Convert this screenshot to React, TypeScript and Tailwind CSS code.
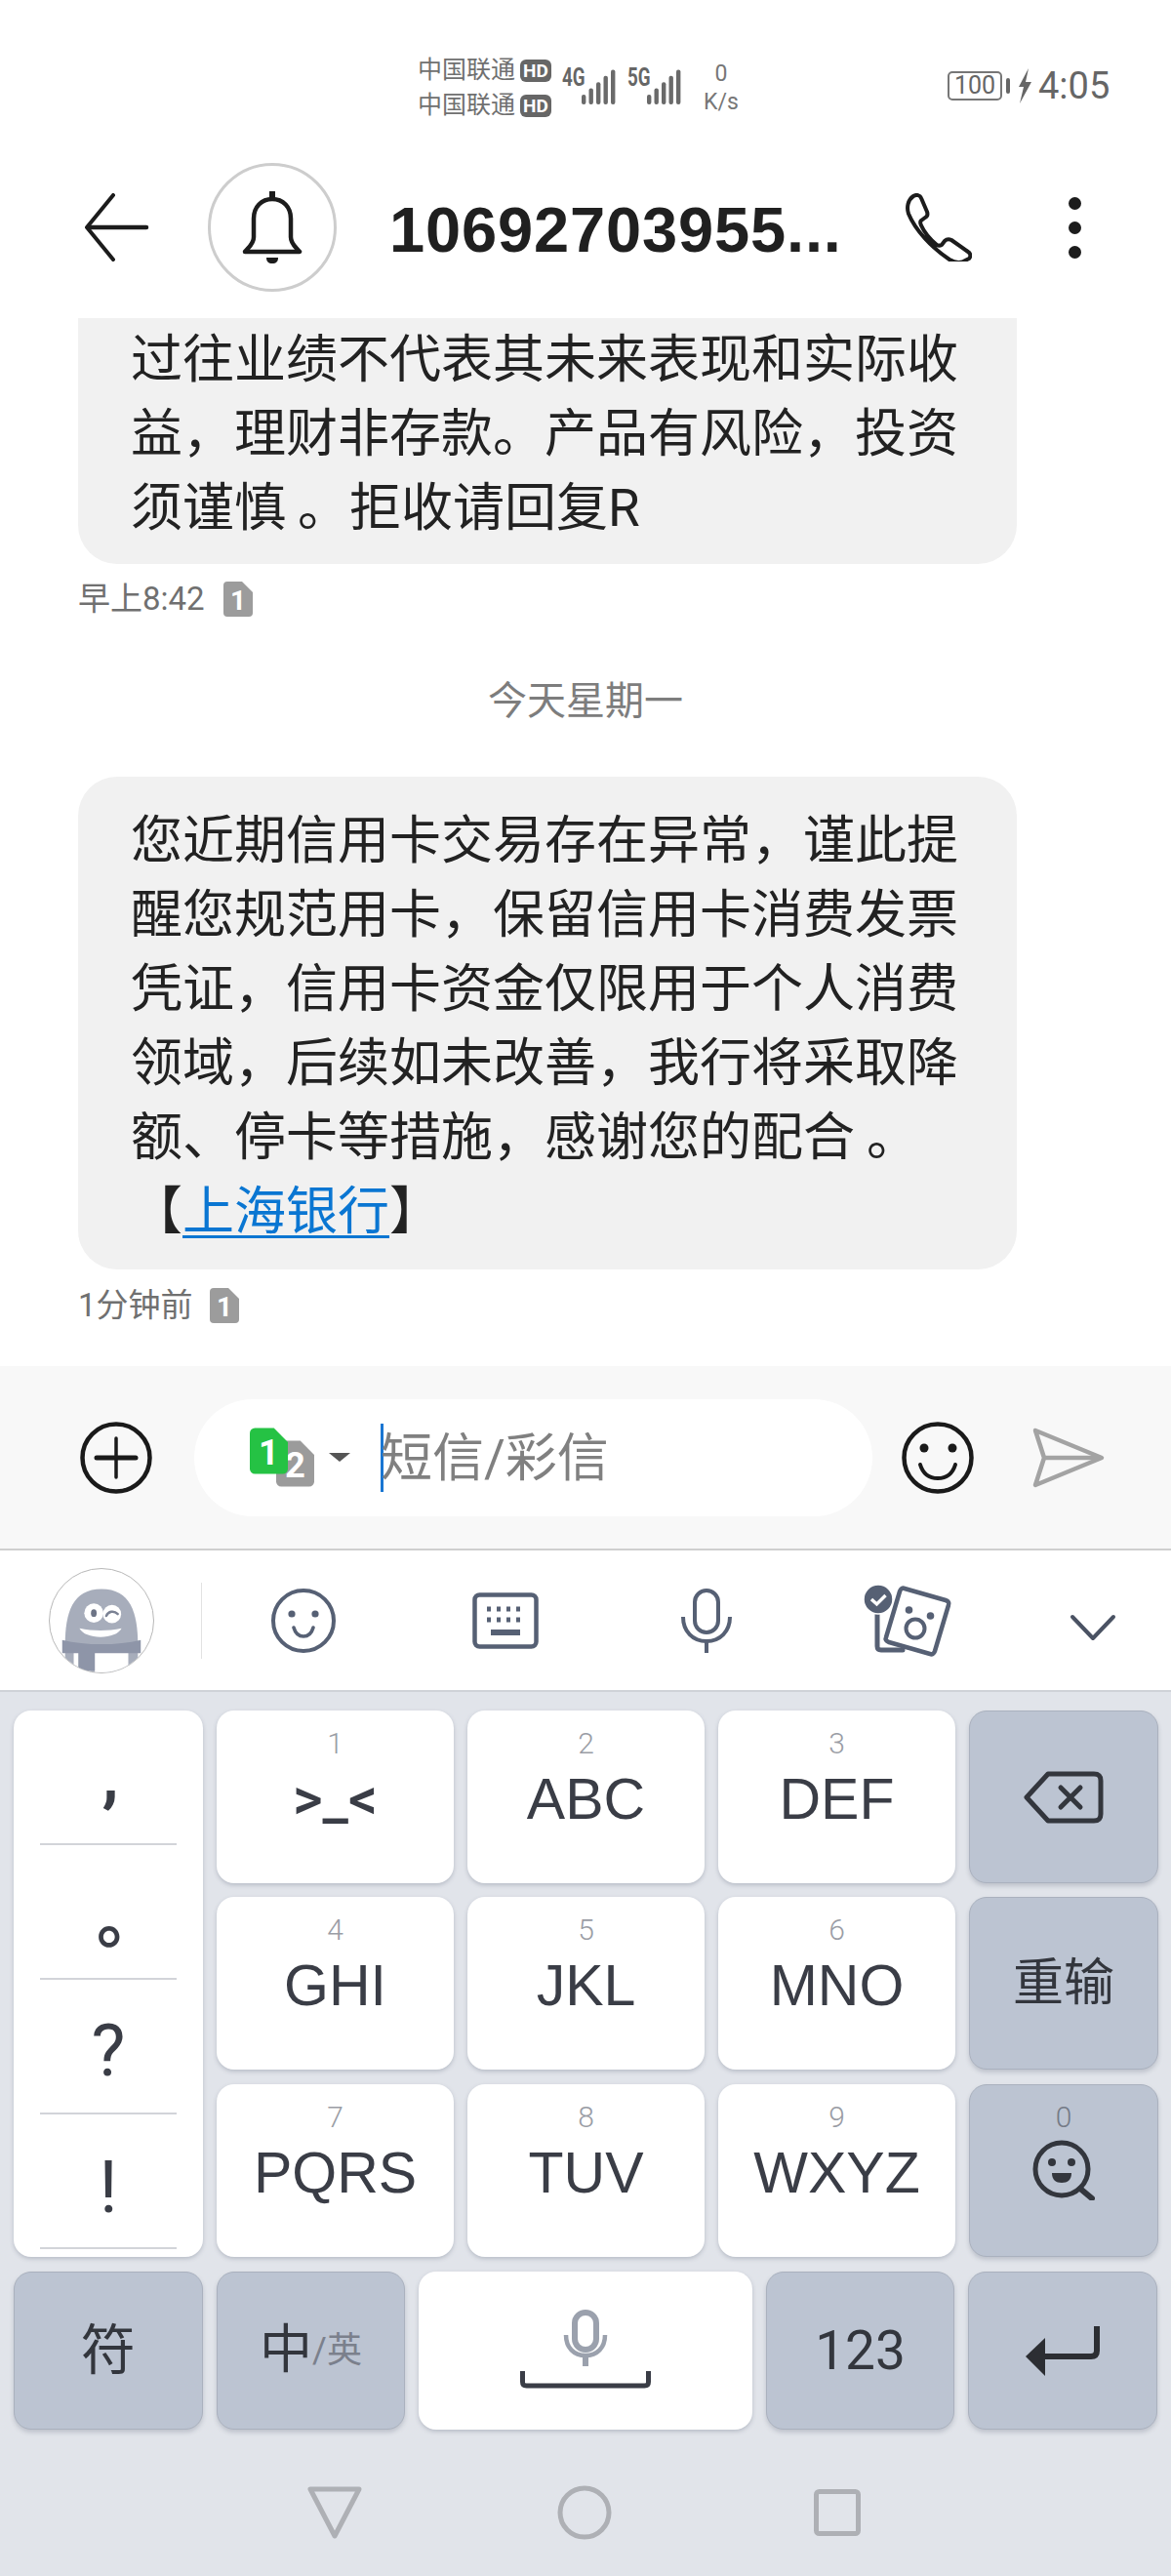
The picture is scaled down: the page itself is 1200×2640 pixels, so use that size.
import React from "react";

const cjk = "font-['Roboto','Noto_Sans_CJK_SC',sans-serif]";
const arial = "font-['Liberation_Sans','Noto_Sans_CJK_SC',sans-serif]";

function Sim({ n, color, className }: { n: string; color: string; className?: string }) {
  return (
    <svg viewBox="0 0 30 36" className={className}>
      <path d="M4 0H19L30 11V32a4 4 0 0 1-4 4H4a4 4 0 0 1-4-4V4a4 4 0 0 1 4-4Z" fill={color} />
      <text x="15" y="29" textAnchor="middle" fontSize="28" fontWeight="700" fill="#fff" fontFamily="Roboto, sans-serif">{n}</text>
    </svg>
  );
}

function Bars({ w }: { w: number }) {
  return (
    <svg width={w} height="36" viewBox="0 0 35 36">
      {[0, 7.5, 15, 22.5, 30].map((x, i) => (
        <rect key={x} x={x} y={26 - i * 6.4} width="4.4" height={10 + i * 6.4} rx="2" fill="#6a6a6a" />
      ))}
    </svg>
  );
}

function StatusBar() {
  return (
    <div className="h-[150px] shrink-0 flex items-start pt-[54px] pl-[428px] text-[#707070]">
      <div className="flex flex-col w-[139px]">
        {[0, 1].map((i) => (
          <div key={i} className="flex items-center h-[36px]">
            <span className="text-[25px] leading-[36px] w-[105px] whitespace-nowrap">中国联通</span>
            <span className="w-[32px] h-[23px] rounded-[6px] bg-[#666] text-white text-[19px] leading-[23px] font-bold text-center">HD</span>
          </div>
        ))}
      </div>
      <div className="ml-[9px] relative w-[55px] h-[60px]">
        <span className="absolute left-0 top-[12px] text-[25px] leading-[28px] font-bold text-[#666] scale-x-75 origin-left">4G</span>
        <div className="absolute left-[20px] top-[17px]"><Bars w={35} /></div>
      </div>
      <div className="ml-[12px] relative w-[55px] h-[60px]">
        <span className="absolute left-0 top-[12px] text-[25px] leading-[28px] font-bold text-[#666] scale-x-75 origin-left">5G</span>
        <div className="absolute left-[20px] top-[17px]"><Bars w={35} /></div>
      </div>
      <div className="ml-[21px] w-[40px] flex flex-col items-center text-[23px] leading-[29px] text-[#777] pt-[7px]">
        <span>0</span>
        <span>K/s</span>
      </div>
      <div className="ml-[212px] mt-[19px] flex items-center h-[30px]">
        <span className="w-[56px] h-[30px] border-2 border-[#777] rounded-[5px] text-[25px] leading-[26px] text-center text-[#666]">100</span>
        <span className="ml-[4px] w-[4px] h-[16px] bg-[#666] rounded-sm" />
        <svg width="18" height="36" viewBox="0 0 18 36" className="ml-[6px]">
          <path d="M13 0 3 19h5L4 36 16 14h-6l3-14Z" fill="#666" />
        </svg>
        <span className="ml-[5px] text-[38px] leading-[44px] text-[#666]">4:05</span>
      </div>
    </div>
  );
}

function Header() {
  return (
    <div className="h-[176px] shrink-0 pb-[10px] flex items-center">
      <svg width="68" height="70" viewBox="0 0 68 70" className="ml-[86px] shrink-0" fill="none" stroke="#1c1c1c" strokeLinecap="round">
        <path d="M30 2 3 35l27 33" strokeWidth="4" strokeLinejoin="round" />
        <path d="M4 35h60" strokeWidth="4.5" />
      </svg>
      <div className="ml-[59px] w-[132px] h-[132px] shrink-0 rounded-full border-[3px] border-[#cdcdcd] flex items-center justify-center">
        <svg width="64" height="74" viewBox="0 0 64 74" fill="none" stroke="#1c1c1c" strokeWidth="4.5">
          <path d="M32 1v6" strokeWidth="6" strokeLinecap="round" />
          <path d="M13 28C13 16 21 8 32 8s19 8 19 20v19c0 7 5 10 9 15H4c4-5 9-8 9-15Z" strokeLinejoin="round" />
          <path d="M26 68h12c0 4-2 6-6 6s-6-2-6-6Z" fill="#1c1c1c" stroke="none" />
        </svg>
      </div>
      <span className={`ml-[54px] mt-[6px] w-[496px] text-[65px] leading-[72px] font-bold text-[#202020] tracking-[0.85px] whitespace-nowrap ${arial}`}>10692703955...</span>
      <svg width="68" height="70" viewBox="0 0 68 70" className="ml-[33px] shrink-0" fill="none" stroke="#1c1c1c" strokeWidth="4" strokeLinejoin="round">
        <path d="M8 3c3-2 7-1 8 2l6 14c1 3 0 5-2 6l-4 3c-1 1-1 3 0 5 4 9 9 14 16 20 2 1 3 1 5 0l3-4c2-2 5-2 7-1l17 12c3 2 3 5 1 7l-6 3c-5 2-9 1-14-2C27 56 10 38 3 21 1 15 2 7 8 3Z" />
      </svg>
      <div className="ml-[99px] flex flex-col gap-[12px] shrink-0">
        <span className="w-[13px] h-[13px] rounded-full bg-[#1c1c1c]" />
        <span className="w-[13px] h-[13px] rounded-full bg-[#1c1c1c]" />
        <span className="w-[13px] h-[13px] rounded-full bg-[#1c1c1c]" />
      </div>
    </div>
  );
}

function Bubble({ lines, className }: { lines: React.ReactNode[]; className: string }) {
  return (
    <div className={`ml-[80px] w-[962px] bg-[#f1f1f1] pl-[54px] text-[53px] leading-[76px] text-[#222] ${className}`}>
      {lines.map((l, i) => (
        <div key={i} className="whitespace-nowrap">{l}</div>
      ))}
    </div>
  );
}

function Stamp({ t, w }: { t: string; w: number }) {
  return (
    <div className="ml-[80px] h-[40px] flex items-center text-[33px] text-[#707070]">
      <span className="whitespace-nowrap" style={{ width: w }}>{t}</span>
      <Sim n="1" color="#9c9c9c" className="w-[30px] h-[36px]" />
    </div>
  );
}

function Messages() {
  return (
    <div className="h-[1074px] shrink-0">
      <Bubble
        className="rounded-b-[40px] pt-[5px] pb-[19px]"
        lines={["过往业绩不代表其未来表现和实际收", "益，理财非存款。产品有风险，投资", <span>须谨慎<span className="ml-[12px]">。</span>拒收请回复R</span>]}
      />
      <div className="mt-[16px]"><Stamp t="早上8:42" w={149} /></div>
      <div className="mt-[55px] h-[60px] leading-[60px] text-center text-[40px] text-[#7d7d7d]">今天星期一</div>
      <Bubble
        className="mt-[47px] rounded-[40px] pt-[28px] pb-[21px]"
        lines={[
          "您近期信用卡交易存在异常，谨此提",
          "醒您规范用卡，保留信用卡消费发票",
          "凭证，信用卡资金仅限用于个人消费",
          "领域，后续如未改善，我行将采取降",
          <span>额、停卡等措施，感谢您的配合<span className="ml-[12px]">。</span></span>,
          <span>【<span className="text-[#0a76d2] underline underline-offset-[6px] decoration-[3px]">上海银行</span>】</span>,
        ]}
      />
      <div className="mt-[17px]"><Stamp t="1分钟前" w={135} /></div>
    </div>
  );
}

function InputBar() {
  return (
    <div className="h-[189px] shrink-0 bg-[#f8f8f8] border-b-2 border-[#cfcfcf] flex items-center">
      <svg width="74" height="74" viewBox="0 0 74 74" className="ml-[82px] shrink-0" fill="none" stroke="#1a1a1a">
        <circle cx="37" cy="37" r="34.5" strokeWidth="4.5" />
        <path d="M37 17v40" strokeWidth="3.5" strokeLinecap="round" />
        <path d="M17 37h40" strokeWidth="5" strokeLinecap="round" />
      </svg>
      <div className="ml-[43px] w-[695px] h-[120px] rounded-[60px] bg-white flex items-center shrink-0">
        <div className="relative ml-[57px] w-[66px] h-[62px] shrink-0">
          <Sim n="2" color="#9b9b9b" className="absolute left-[27px] top-[13px] w-[39px] h-[48px]" />
          <Sim n="1" color="#25c244" className="absolute left-0 top-0 w-[39px] h-[48px]" />
        </div>
        <svg width="22" height="9" viewBox="0 0 22 9" className="ml-[15px] shrink-0"><path d="M0 0h22L11 9Z" fill="#555" /></svg>
        <span className="ml-[31px] w-[3px] h-[70px] bg-[#1976d2] shrink-0" />
        <span className="text-[53px] leading-[64px] text-[#808080] whitespace-nowrap -ml-[3px] mt-[3px]">短信/彩信</span>
      </div>
      <svg width="74" height="74" viewBox="0 0 74 74" className="ml-[30px] shrink-0" fill="none" stroke="#1a1a1a" strokeWidth="4.5">
        <circle cx="37" cy="37" r="34.5" />
        <circle cx="23" cy="27" r="4.5" fill="#1a1a1a" stroke="none" />
        <circle cx="52" cy="27" r="4.5" fill="#1a1a1a" stroke="none" />
        <path d="M19 44c3 10 10 14 18 14s15-4 18-14" strokeWidth="4" strokeLinecap="round" />
      </svg>
      <svg width="74" height="62" viewBox="0 0 74 62" className="ml-[60px] shrink-0" fill="none" stroke="#a3a3a3" strokeWidth="4.5" strokeLinejoin="round">
        <path d="M3 3 71 31 3 59l9-28Z" />
        <path d="M12 31h58" />
      </svg>
    </div>
  );
}

const ic = "#566074";

function Toolbar() {
  return (
    <div className="h-[145px] shrink-0 bg-white border-b-2 border-[#cfd2d8] flex items-center">
      <div className="ml-[50px] w-[108px] h-[108px] rounded-full border border-[#b8b8b8] overflow-hidden shrink-0 bg-white">
        <svg viewBox="0 0 108 108" className="w-full h-full">
          <path d="M16 80C16 45 24 21 54 21s38 24 38 59v28H16Z" fill="#a7adbb" />
          <path d="M47 87h35v21H47Z" fill="#fff" />
          <path d="M25 87h5v21h-5Z" fill="#fff" />
          <circle cx="46" cy="46" r="10" fill="#fff" />
          <ellipse cx="46" cy="46" rx="3" ry="4" fill="#6d7486" />
          <circle cx="65" cy="47" r="9.5" fill="#fff" />
          <path d="M59 49c2-5 8-6 12-2" stroke="#7b8294" strokeWidth="2.5" fill="none" strokeLinecap="round" />
          <path d="M31 62c14 3 30 3 44 0-3 6-12 9-22 9s-19-3-22-9Z" fill="#fff" />
          <path d="M13 74c25 6 57 6 82 0v14H13Z" fill="#8e95a8" />
          <path d="M30 87h17v19H30Z" fill="#8e95a8" />
        </svg>
      </div>
      <span className="ml-[48px] w-px h-[78px] bg-[#e2e2e2] shrink-0" />
      <svg width="68" height="68" viewBox="0 0 68 68" className="ml-[70px] shrink-0" fill="none" stroke={ic} strokeWidth="4">
        <circle cx="34" cy="34" r="31" />
        <circle cx="22" cy="27" r="3.6" fill={ic} stroke="none" />
        <circle cx="46" cy="27" r="3.6" fill={ic} stroke="none" />
        <path d="M24 41c2 7 6 9 10 9s8-2 10-9" strokeWidth="3.6" strokeLinecap="round" />
      </svg>
      <svg width="68" height="58" viewBox="0 0 68 58" className="ml-[139px] shrink-0" fill="none">
        <rect x="2.5" y="2.5" width="63" height="53" rx="5" stroke={ic} strokeWidth="4.5" />
        <path d="M15 17h4m6 0h4m6 0h4m6 0h4M15 28h4m6 0h4m6 0h4m6 0h4" stroke={ic} strokeWidth="5" />
        <rect x="19" y="38" width="30" height="6" fill={ic} />
      </svg>
      <svg width="52" height="66" viewBox="0 0 52 66" className="ml-[146px] shrink-0" fill="none" stroke={ic} strokeWidth="4">
        <rect x="14" y="2" width="24" height="43" rx="12" />
        <path d="M2 29c0 15 10 25 24 25s24-10 24-25" />
        <path d="M26 54v12" />
      </svg>
      <svg width="120" height="100" viewBox="0 0 120 100" className="ml-[122px] shrink-0" fill="none">
        <path d="M27 36v40c0 3 1 4 4 4h22" stroke={ic} strokeWidth="5" strokeLinecap="round" />
        <path d="M55 17 97 29c3 1 4 3 3 5L86 81c-1 3-3 4-5 3L39 72c-3-1-4-3-3-5L50 20c1-3 3-4 5-3Z" fill="#fff" stroke={ic} strokeWidth="4.5" strokeLinejoin="round" />
        <circle cx="66" cy="58" r="9.5" stroke={ic} strokeWidth="4" />
        <circle cx="59.5" cy="39" r="3.8" fill={ic} />
        <circle cx="81.5" cy="45" r="3.8" fill={ic} />
        <circle cx="28" cy="28" r="15" fill={ic} stroke="#fff" strokeWidth="1.5" />
        <path d="M21 28l5.5 5 9-9" stroke="#fff" strokeWidth="3.4" />
      </svg>
      <svg width="48" height="28" viewBox="0 0 48 28" className="ml-[104px] mt-[14px] shrink-0" fill="none" stroke="#4a5263" strokeWidth="4" strokeLinecap="round" strokeLinejoin="round">
        <path d="M3 3 24 25 45 3" />
      </svg>
    </div>
  );
}

const white = "bg-white shadow-[0_2px_4px_rgba(90,100,120,0.3)]";
const gray = "bg-[#bcc4d2] border border-[#aab1be] shadow-[0_3px_4px_rgba(90,100,120,0.25)]";

function Key({ n, t, face = `text-[59px] ${arial}` }: { n: string; t: string; face?: string }) {
  return (
    <div className={`${white} rounded-[18px] h-[177px] relative flex items-center justify-center text-[#3a3d46]`}>
      <span className={`absolute top-[16px] inset-x-0 text-center text-[30px] leading-[36px] text-[#9a9da5] font-light ${cjk}`}>{n}</span>
      <span className={`${face} leading-[70px] mt-[5px] whitespace-nowrap`}>{t}</span>
    </div>
  );
}

function Keyboard() {
  return (
    <div className="flex-1 bg-[#e1e4ea] px-[14px] pt-[19px]">
      <div className="grid grid-cols-[194px_243px_243px_243px_194px] gap-x-[14px] gap-y-[14px]">
        <div className={`${white} row-span-3 rounded-[18px] overflow-hidden flex flex-col items-center text-[#3a3d46] h-[560px]`}>
          {[
            [",", "pb-[25px] pl-[4px] font-bold text-[70px]"],
            ["。", "pb-[14px] pl-[42px] text-[66px] font-bold"],
            ["?", "pb-[18px] text-[74px]"],
            ["!", "pb-[16px] text-[74px]"],
          ].map(([c, k]) => (
            <div key={c} className="w-[140px] h-[138px] shrink-0 border-b-2 border-[#d2d4d9] flex items-end justify-center">
              <span className={`${k} leading-[90px]`}>{c}</span>
            </div>
          ))}
        </div>
        <Key n="1" t=">_<" face="text-[59px] font-medium" />
        <Key n="2" t="ABC" />
        <Key n="3" t="DEF" />
        <div className={`${gray} rounded-[18px] h-[177px] flex items-center justify-center`}>
          <svg width="82" height="54" viewBox="0 0 82 54" fill="none" stroke="#33363d" strokeWidth="5" strokeLinejoin="round" strokeLinecap="round">
            <path d="M25 3h47c5 0 7 2 7 7v34c0 5-2 7-7 7H25L3 27Z" />
            <path d="M38 17l20 20M58 17 38 37" />
          </svg>
        </div>
        <Key n="4" t="GHI" />
        <Key n="5" t="JKL" />
        <Key n="6" t="MNO" />
        <div className={`${gray} rounded-[18px] h-[177px] flex items-center justify-center text-[52px] text-[#33363d]`}>重输</div>
        <Key n="7" t="PQRS" />
        <Key n="8" t="TUV" />
        <Key n="9" t="WXYZ" />
        <div className={`${gray} rounded-[18px] h-[177px] flex flex-col items-center`}>
          <span className="mt-[15px] text-[30px] leading-[36px] text-[#757b87] font-light">0</span>
          <svg width="64" height="62" viewBox="0 0 64 62" className="mt-[5px]" fill="none" stroke="#33363d" strokeWidth="5">
            <circle cx="30" cy="30" r="27" />
            <circle cx="20" cy="23" r="4" fill="#33363d" stroke="none" />
            <circle cx="40" cy="23" r="4" fill="#33363d" stroke="none" />
            <path d="M20 34h20c0 7-4 10-10 10s-10-3-10-10Z" fill="#33363d" stroke="none" />
            <path d="M49 50l12 10" strokeLinecap="round" strokeWidth="6" />
          </svg>
        </div>
      </div>
      <div className="flex gap-[14px] mt-[15px] h-[162px] text-[#33363d]">
        <div className={`${gray} w-[194px] rounded-[18px] flex items-center justify-center text-[56px]`}>符</div>
        <div className={`${gray} w-[194px] rounded-[18px] flex items-center justify-center`}>
          <span className="text-[54px] pb-[2px]">中</span>
          <span className="text-[36px] text-[#7b808c]">/英</span>
        </div>
        <div className={`${white} w-[342px] rounded-[18px] flex flex-col items-center pt-[39px]`}>
          <svg width="46" height="58" viewBox="0 0 46 58" fill="none" stroke="#9ba1ad" strokeWidth="6">
            <rect x="12" y="3" width="22" height="38" rx="11" />
            <path d="M3 26c0 13 8 21 20 21s20-8 20-21" strokeWidth="4.5" />
            <path d="M23 47v11" />
          </svg>
          <svg width="134" height="18" viewBox="0 0 134 18" fill="none" stroke="#3a3d46" className="mt-[5px]">
            <path d="M2.5 0v11c0 3 1 4 4 4h121c3 0 4-1 4-4V0" strokeWidth="5" />
          </svg>
        </div>
        <div className={`${gray} w-[194px] rounded-[18px] flex items-center justify-center text-[55px]`}>123</div>
        <div className={`${gray} w-[194px] rounded-[18px] flex items-center justify-center`}>
          <svg width="76" height="54" viewBox="0 0 76 54" fill="none">
            <path d="M73 2v25c0 4-2 6-6 6H18" stroke="#2c2e33" strokeWidth="6" />
            <path d="M0 33 20 14v39Z" fill="#2c2e33" />
          </svg>
        </div>
      </div>
      <div className="flex justify-center items-center h-[150px] pt-[20px]">
        <svg width="56" height="56" viewBox="0 0 56 56" fill="none" stroke="#aeb0b5" strokeWidth="5" strokeLinejoin="round" className="-ml-[3px]">
          <path d="M3 4h50L28 52Z" />
        </svg>
        <svg width="56" height="56" viewBox="0 0 56 56" fill="none" stroke="#aeb0b5" strokeWidth="5" className="ml-[200px]">
          <circle cx="28" cy="28" r="25" />
        </svg>
        <svg width="48" height="48" viewBox="0 0 48 48" fill="none" stroke="#aeb0b5" strokeWidth="5" className="ml-[207px]">
          <rect x="2.5" y="2.5" width="43" height="43" rx="3" />
        </svg>
      </div>
    </div>
  );
}

export default function App() {
  return (
    <div className={`w-[1200px] h-[2640px] bg-white flex flex-col overflow-hidden ${cjk}`}>
      <StatusBar />
      <Header />
      <Messages />
      <InputBar />
      <Toolbar />
      <Keyboard />
    </div>
  );
}
